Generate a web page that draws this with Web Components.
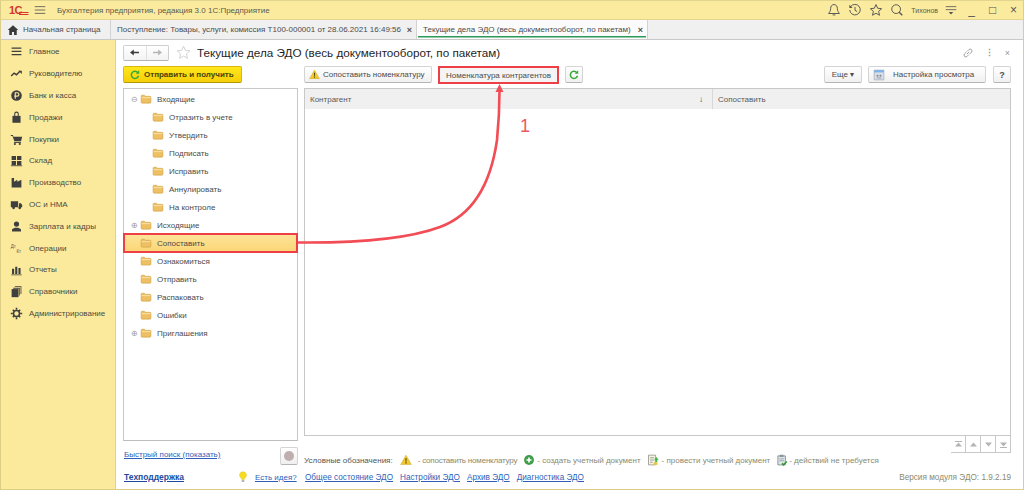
<!DOCTYPE html>
<html lang="ru">
<head>
<meta charset="utf-8">
<title>Текущие дела ЭДО</title>
<style>
  html, body { margin: 0; padding: 0; background: #fff; font-family: "Liberation Sans", Arial, sans-serif; }
  body { width: 1024px; height: 490px; overflow: hidden; }
</style>
</head>
<body>
<edo-app></edo-app>
<script>
(function () {
const ICONS = {
  menu: '<path d="M2 3h12v1.6H2zM2 7h12v1.6H2zM2 11h12v1.6H2z" fill="#3f3f3f"/>',
  lines: '<path d="M1 3.5h14M1 8h14M1 12.5h14" stroke="#555" stroke-width="1.1"/>',
  filter: '<path d="M1 3.5h14M1 7.5h14" stroke="#555" stroke-width="1.1"/><path d="M5 10.5h6L8 14z" fill="#555"/>',
  home: '<path d="M8 1.5L1 8h2v6.5h3.6v-4h2.8v4H13V8h2z" fill="#3a3a3a"/>',
  trend: '<path d="M1.5 11l3.5-3.5 3 2 4.5-4.5" fill="none" stroke="#3f3f3f" stroke-width="1.8"/><path d="M10.5 4.5h4v4z" fill="#3f3f3f"/>',
  ruble: '<circle cx="8" cy="8" r="6.5" fill="#3f3f3f"/><path d="M6.5 12V4.6h2.4a2 2 0 0 1 0 4.2H5.2" fill="none" stroke="#fbea9c" stroke-width="1.4"/>',
  bag: '<path d="M3 6h10v8.5H3z" fill="#3f3f3f"/><path d="M5.8 7V3.6a2.2 2.2 0 0 1 4.4 0V7" fill="none" stroke="#3f3f3f" stroke-width="1.3"/>',
  cart: '<path d="M1 2.5h2.6l.6 2H15l-1.4 5.5H5.4L3 3.8H1z" fill="#3f3f3f"/><path d="M5 11h8.5v1.2H5z" fill="#3f3f3f"/><circle cx="6" cy="13.6" r="1.3" fill="#3f3f3f"/><circle cx="12" cy="13.6" r="1.3" fill="#3f3f3f"/>',
  grid: '<path d="M2 2.5h5.4v5H2zM8.6 2.5H14v5H8.6zM2 8.7h5.4v5H2zM8.6 8.7H14v5H8.6z" fill="#3f3f3f"/><path d="M1 14h14v1H1z" fill="#3f3f3f"/>',
  factory: '<path d="M2 14V2.5h3V7l4-2.5V7l5-2.5V14z" fill="#3f3f3f"/>',
  truck: '<path d="M1 4h9v7.5H1zM11 6.5h2.5L15 8.6v2.9h-4z" fill="#3f3f3f"/><circle cx="4.4" cy="12" r="1.7" fill="#3f3f3f"/><circle cx="12" cy="12" r="1.7" fill="#3f3f3f"/>',
  person: '<circle cx="8" cy="5" r="3.2" fill="#3f3f3f"/><path d="M2.5 14v-2.5L6 9.5h4l3.5 2V14z" fill="#3f3f3f"/>',
  ops: '<text x="1" y="7" font-size="5.5" font-family="Liberation Sans" fill="#555">Дт</text><text x="8" y="13.5" font-size="5.5" font-family="Liberation Sans" fill="#555">Кт</text>',
  bars: '<path d="M2.5 7h2.6v6.5H2.5zM6.4 4.5H9v9H6.4zM10.4 6.2H13v7.3h-2.6zM1.5 14h13v1h-13z" fill="#3f3f3f"/>',
  books: '<path d="M2 5h8.5v10H2z" fill="#3f3f3f"/><path d="M4 3.5h8v9.5h-1V4.5H4zM6 1.5h8v9.5h-1V2.5H6z" fill="#3f3f3f"/>',
  gear: '<circle cx="8" cy="8" r="3.7" fill="none" stroke="#3f3f3f" stroke-width="2"/><path d="M7 1h2v2.4H7zM7 12.6h2V15H7zM1 7h2.4v2H1zM12.6 7H15v2h-2.4zM2.8 4.2l1.4-1.4 1.7 1.7-1.4 1.4zM10.1 11.5l1.4-1.4 1.7 1.7-1.4 1.4zM2.8 11.8l1.7-1.7 1.4 1.4-1.7 1.7zM10.1 4.5l1.7-1.7 1.4 1.4-1.7 1.7z" fill="#3f3f3f"/>',
  folder: '<path d="M1.5 4.2c0-.7.5-1.2 1.2-1.2h3.2l1.3 1.4h6.1c.7 0 1.2.5 1.2 1.2v6.7c0 .7-.5 1.2-1.2 1.2H2.7c-.7 0-1.2-.5-1.2-1.2z" fill="#eec063" stroke="#cf9f45" stroke-width=".8"/><path d="M2.2 6.2h11.6" stroke="#fbe6ae" stroke-width="1.2"/>',
  refresh: '<path d="M12.6 9a4.8 4.8 0 1 1-1-4.3" fill="none" stroke="#35a835" stroke-width="2"/><path d="M13.6 1.8v4.6H9z" fill="#35a835"/>',
  warn: '<path d="M8 1.5L15.2 14H.8z" fill="#f1c92f" stroke="#c9a31e" stroke-width=".6"/><path d="M7.2 5.5h1.6l-.3 4.8h-1zM7.2 11h1.6v1.6H7.2z" fill="#4a3c05"/>',
  plus: '<circle cx="8" cy="8" r="6.6" fill="#3f9e4a"/><path d="M4.6 6.9h2.3V4.6h2.2v2.3h2.3v2.2H9.1v2.3H6.9V9.1H4.6z" fill="#fff"/>',
  docgo: '<path d="M2 1.5h9.5v13H2z" fill="#f3f3e6" stroke="#8b8b7c"/><path d="M4 5h5.5M4 8h5.5M4 11h3.5" stroke="#8b8b7c"/><path d="M9.5 7.5l3-3.5 3 3.5h-1.8v3h-2.4v-3z" fill="#42b64a"/><path d="M9 11h5v3.5H9z" fill="#e8c643"/>',
  clip: '<path d="M2.5 2.5h10v12h-10z" fill="#dfe6ea" stroke="#707a80"/><path d="M5 1h5v3H5z" fill="#8a949a"/><path d="M4.5 6.5h6M4.5 9h6" stroke="#8a949a"/><path d="M8 12.5l2 2 4.5-4.5" fill="none" stroke="#2f9a35" stroke-width="2"/>',
  settings: '<path d="M1.5 1.5h13v13h-13z" fill="#d9dee6" stroke="#a7adb8"/><path d="M1.5 1.5h13v3h-13z" fill="#7fb2e8"/><circle cx="6" cy="9" r="1.4" fill="#838a97"/><circle cx="10" cy="9" r="1.4" fill="#838a97"/><path d="M5 12h6" stroke="#838a97"/>',
  bell: '<path d="M8 1.8c-2.6 0-3.8 2-3.8 4.5 0 3-1.7 4.6-2.4 5.7h12.4c-.7-1.1-2.4-2.7-2.4-5.7 0-2.5-1.2-4.5-3.8-4.5zM6.4 13.6h3.2" fill="none" stroke="#555" stroke-width="1.1"/>',
  history: '<path d="M3 4.3A6 6 0 1 1 2 8" fill="none" stroke="#555" stroke-width="1.1"/><path d="M1.6 2v3.6h3.6z" fill="#555"/><path d="M8 4.5v3.8l2.4 1.5" fill="none" stroke="#555" stroke-width="1.1"/>',
  star: '<path d="M8 1.8l1.9 4.2 4.5.5-3.4 3 1 4.5L8 11.7 4 14l1-4.5-3.4-3 4.5-.5z" fill="none" stroke="#555" stroke-width="1.1"/>',
  search: '<circle cx="7" cy="7" r="5" fill="none" stroke="#555" stroke-width="1.1"/><path d="M10.6 10.6l3.4 3.4" stroke="#555" stroke-width="1.6"/>',
  link: '<path d="M6.5 9.5l3-3M6 6.5L3.4 9.1a2.4 2.4 0 0 0 3.4 3.4L9 10.3M7 5.7l2.2-2.2a2.4 2.4 0 0 1 3.4 3.4L10 9.5" fill="none" stroke="#8a8a8a" stroke-width="1.1"/>',
  bulb: '<path d="M8 1a4.6 4.6 0 0 0-2.6 8.4c.6.5.8 1.1.8 1.8h3.6c0-.7.2-1.3.8-1.8A4.6 4.6 0 0 0 8 1z" fill="#f6dc1b" stroke="#dcbb10" stroke-width=".6"/><path d="M6.2 12h3.6v2.6H6.2z" fill="#b5b5b5"/>',
  back: '<path d="M1.5 8L7 3.5V7h7.5v2H7v3.5z" fill="#3a3a3a"/>',
  forward: '<path d="M14.5 8L9 3.5V7H1.5v2H9v3.5z" fill="#b5b5b5"/>'
};

function icon(name, size) {
  const s = size || 16;
  return `<svg width="${s}" height="${s}" viewBox="0 0 16 16" aria-hidden="true" style="display:block;flex:none">${ICONS[name]}</svg>`;
}

// base class, all elements below just give their css + html
class ShadowEl extends HTMLElement {
  constructor() {
    super();
    this.attachShadow({ mode: 'open' });
  }
  connectedCallback() {
    this.shadowRoot.innerHTML = `<style>${this.css()}</style>${this.html()}`;
  }
  css() { return ':host { display: block; }'; }
  html() { return '<slot></slot>'; }
}

class TitleBar extends ShadowEl {
  css() {
    return `
      :host { display: flex; align-items: center; height: 18px; background: #fbeb9f; border-bottom: 1px solid #e2d68f; color: #5b5a4a; font-size: 8px; box-sizing: content-box; }
      .logo { position: relative; width: 19px; height: 12px; margin-left: 8px; color: #d8352a; font: bold 11px/12px "Liberation Sans", sans-serif; letter-spacing: -.5px; }
      .logo svg { position: absolute; left: 8px; top: 0; }
      .burger { margin-left: 6px; }
      .name { margin-left: 11px; flex: 1; white-space: nowrap; }
      .tools { display: flex; align-items: center; gap: 7px; }
      .user { font-size: 7px; margin-right: -4px; }
      .win { display: flex; margin-right: -1px; }
      .win span { width: 21px; text-align: center; font-size: 12px; color: #555; }
    `;
  }
  html() {
    const swoosh = '<svg width="12" height="12" viewBox="0 0 12 12" aria-hidden="true"><path d="M2 8.5h9.5M2 10.5h9.5" stroke="#d8352a" stroke-width="1"/></svg>';
    return `
      <span class="logo">1С${swoosh}</span>
      <span class="burger">${icon('lines', 12)}</span>
      <span class="name">Бухгалтерия предприятия, редакция 3.0 1С:Предприятие</span>
      <div class="tools">
        ${icon('bell', 14)}${icon('history', 14)}${icon('star', 14)}${icon('search', 14)}
        <span class="user">Тихонов</span>
        <span style="width:20px;padding-left:4px;box-sizing:border-box;margin-right:-7px">${icon('filter', 12)}</span>
        <span class="win"><span>_</span><span>□</span><span>×</span></span>
      </div>`;
  }
}

class TabBar extends ShadowEl {
  css() {
    return `
      :host { display: flex; height: 20px; background: #f0f0f0; border-bottom: 1px solid #c9c9c9; box-sizing: border-box; font-size: 8px; color: #4b4b4b; white-space: nowrap; }
      .tab { display: flex; align-items: center; border-right: 1px solid #d2d2d2; box-sizing: border-box; }
      .home { width: 110px; padding-left: 6px; gap: 4px; }
      .doc { width: 306px; padding: 0 4px 0 6px; justify-content: space-between; }
      .cur { width: 231px; padding: 0 4px 0 6px; justify-content: space-between; background: linear-gradient(#2c9a5a, #2c9a5a) no-repeat 1px 16px / calc(100% - 2px) 1.5px, #fbfbfb; }
      b { font-weight: bold; color: #555; font-size: 9px; }
    `;
  }
  html() {
    return `
      <div class="tab home">${icon('home', 12)}<span>Начальная страница</span></div>
      <div class="tab doc"><span>Поступление: Товары, услуги, комиссия Т100-000001 от 28.06.2021 16:49:56</span><b>×</b></div>
      <div class="tab cur"><span>Текущие дела ЭДО (весь документооборот, по пакетам)</span><b>×</b></div>`;
  }
}

class SideMenu extends ShadowEl {
  css() {
    return `
      :host { display: block; width: 115px; flex: none; background: #fbea9c; border-right: 1px solid #e0d186; box-sizing: border-box; padding-top: 1px; font-size: 8px; color: #4c4b3e; }
      .row { display: flex; align-items: center; height: 21.8px; padding-left: 9px; gap: 6px; white-space: nowrap; }
    `;
  }
  html() {
    const items = [
      ['menu', 'Главное'], ['trend', 'Руководителю'], ['ruble', 'Банк и касса'], ['bag', 'Продажи'],
      ['cart', 'Покупки'], ['grid', 'Склад'], ['factory', 'Производство'], ['truck', 'ОС и НМА'],
      ['person', 'Зарплата и кадры'], ['ops', 'Операции'], ['bars', 'Отчеты'], ['books', 'Справочники'],
      ['gear', 'Администрирование']
    ];
    return items.map(([i, t]) => `<div class="row">${icon(i, 13)}<span>${t}</span></div>`).join('');
  }
}

class ToolButton extends HTMLElement {
  constructor() {
    super();
    this.attachShadow({ mode: 'open' }).innerHTML = `
      <style>
        :host { display: inline-flex; align-items: center; justify-content: center; gap: 3px; box-sizing: border-box; height: 17px; padding: 0 4px; font-size: 8px; color: #4b4b4b; white-space: nowrap;
          background: linear-gradient(#ffffff, #f0f0f0); border: 1px solid #d4d4d4; border-bottom-color: #b5b5b5; border-radius: 2px; flex: none; }
        :host([primary]) { width: 119px; padding-left: 5px; background: linear-gradient(#ffe71c, #f6cf08); border-color: #d9b90c; border-bottom-color: #b39809; color: #4a4205; font-weight: bold; justify-content: flex-start; }
        :host([marked]) { height: 18px; border: 2px solid #ee3f47; border-radius: 0; background: #f4f4f4; }
        :host([left]) { justify-content: flex-start; }
      </style><slot></slot>`;
  }
}

class TreeRow extends HTMLElement {
  constructor() {
    super();
    const depth = +this.getAttribute('depth') || 0;
    const toggle = this.getAttribute('toggle');
    const mark = toggle === 'open' ? '⊖' : toggle === 'closed' ? '⊕' : '';
    this.attachShadow({ mode: 'open' }).innerHTML = `
      <style>
        :host { display: flex; align-items: center; height: 18px; font-size: 8px; color: #4b4b4b; white-space: nowrap; box-sizing: border-box; }
        :host([selected]) { background: linear-gradient(#fde49a, #fbd675); outline: 2px solid #ee3f47; outline-offset: -1px; }
        .t { width: 10px; margin-left: 5px; font-size: 8px; color: #999; text-align: center; flex: none; }
        .f { margin: 0 5px 0 ${depth * 12 + 1}px; }
      </style>
      <span class="t">${mark}</span><span class="f">${icon('folder', 12)}</span><slot></slot>`;
  }
}

class FolderTree extends ShadowEl {
  css() {
    return `:host { display: block; flex: 1; border: 1px solid #c8c8c8; border-bottom-color: #bdbdbd; padding-top: 1px; background: #fff; box-sizing: border-box; }`;
  }
}

class DataTable extends ShadowEl {
  css() {
    return `
      :host { display: block; flex: 1; border: 1px solid #c8c8c8; box-sizing: border-box; background: #fff; font-size: 8px; color: #5a5a5a; }
      .head { display: grid; grid-template-columns: 407px 1fr; height: 20px; background: #f0f0f0; align-items: center; }
      .c { display: flex; justify-content: space-between; align-items: center; padding: 0 5px; height: 100%; box-sizing: border-box; }
      .c + .c { border-left: 1px solid #d8d8d8; }
      .sort { color: #444; font-size: 8px; margin-right: 4px; }
    `;
  }
  html() {
    return `<div class="head"><div class="c"><span>Контрагент</span><span class="sort">↓</span></div><div class="c"><span>Сопоставить</span></div></div>`;
  }
}

class TablePager extends ShadowEl {
  css() {
    return `
      :host { display: flex; justify-content: flex-end; height: 17px; flex: none; }
      .p { width: 15px; display: flex; align-items: center; justify-content: center; box-sizing: border-box; border: 1px solid #c8c8c8; border-top: 0; border-left: 0; }
      .p:first-child { border-left: 1px solid #c8c8c8; }
      svg { display: block; }
    `;
  }
  html() {
    const top = '<path d="M1 1h7v1H1z" fill="#b4b4b4"/>', bot = '<path d="M1 7h7v1H1z" fill="#b4b4b4"/>';
    const up = '<path d="M4.5 2.5L8 6.5H1z" fill="#b4b4b4"/>', dn = '<path d="M1 2.5h7L4.5 6.5z" fill="#b4b4b4"/>';
    return [top + up, up, dn, dn + bot].map((p) => `<div class="p"><svg width="9" height="9" viewBox="0 0 9 9">${p}</svg></div>`).join('');
  }
}

class LegendBar extends ShadowEl {
  css() {
    return `
      :host { display: flex; align-items: center; height: 14px; flex: none; font-size: 8px; color: #8a8a70; white-space: nowrap; }
      .l { color: #555; margin-right: 7px; }
      .tight { letter-spacing: -.2px; }
      span { margin-right: 6px; }
      .a { margin-right: 6px; } .b { margin-right: 2px; } .c { margin-right: 3px; } .d { margin-right: 1px; }
    `;
  }
  html() {
    return `
      <span class="l">Условные обозначения:</span><i class="a">${icon('warn', 12)}</i><span class="tight">- сопоставить номенклатуру</span>
      <i class="b">${icon('plus', 12)}</i><span>- создать учетный документ</span>
      <i class="c">${icon('docgo', 12)}</i><span>- провести учетный документ</span>
      <i class="d">${icon('clip', 12)}</i><span>- действий не требуется</span>`;
  }
}

class LinkBar extends ShadowEl {
  css() {
    return `
      :host { display: flex; align-items: center; height: 22px; padding-bottom: 2px; box-sizing: border-box; flex: none; font-size: 8.2px; white-space: nowrap; }
      a { color: #2f5fb8; text-decoration: underline; }
      .sup { width: 113px; margin-left: 1px; font-weight: bold; font-size: 8.5px; color: #1d4aa0; flex: none; }
      .bulb { width: 18px; flex: none; }
      .idea { width: 50px; flex: none; font-size: 8px; }
      .links { display: flex; gap: 7px; flex: 1; }
      .ver { color: #8a8a70; }
    `;
  }
  html() {
    return `
      <a class="sup">Техподдержка</a><span class="bulb">${icon('bulb', 12)}</span>
      <a class="idea">Есть идея?</a>
      <div class="links"><a>Общее состояние ЭДО</a><a>Настройки ЭДО</a><a>Архив ЭДО</a><a>Диагностика ЭДО</a></div>
      <span class="ver">Версия модуля ЭДО: 1.9.2.19</span>`;
  }
}

class FormHeader extends ShadowEl {
  css() {
    return `
      :host { display: flex; align-items: center; height: 17px; flex: none; }
      .nav { display: flex; width: 46px; height: 16px; box-sizing: border-box; border: 1px solid #cfcfcf; border-bottom-color: #b5b5b5; border-radius: 2px; background: linear-gradient(#fff, #f3f3f3); }
      .nav span { flex: 1; display: flex; align-items: center; justify-content: center; }
      .nav span + span { border-left: 1px solid #e0e0e0; }
      .star { margin: 0 6px 0 7px; }
      h1 { margin: 0; font-size: 11.7px; font-weight: normal; color: #1f1f1f; flex: 1; white-space: nowrap; }
      .r { display: flex; align-items: center; gap: 11px; margin-right: 1px; color: #999; font-size: 9px; }
    `;
  }
  html() {
    const star = '<svg width="15" height="15" viewBox="0 0 16 16" style="display:block"><path d="M8 1.2l2 4.5 4.8.5-3.6 3.2 1 4.8L8 11.8 3.8 14.2l1-4.8L1.2 6.2 6 5.7z" fill="#fff" stroke="#cfcfcf"/></svg>';
    return `
      <div class="nav"><span>${icon('back', 11)}</span><span>${icon('forward', 11)}</span></div>
      <span class="star">${star}</span>
      <h1>Текущие дела ЭДО (весь документооборот, по пакетам)</h1>
      <div class="r">${icon('link', 12)}<span style="font-weight:bold">⋮</span><span>×</span></div>`;
  }
}

class EdoApp extends ShadowEl {
  css() {
    return `
      :host { display: flex; flex-direction: column; width: 1024px; height: 490px; box-sizing: border-box; border: 1px solid #dccf85; border-top-color: #e2d68f; font-family: "Liberation Sans", Arial, sans-serif; position: relative; overflow: hidden; background: #fff; }
      .main { display: flex; flex: 1; min-height: 0; }
      .content { flex: 1; display: flex; flex-direction: column; min-width: 0; padding: 4px 12px 0 7px; box-sizing: border-box; }
      .tools { display: grid; grid-template-columns: 175px 1fr; column-gap: 6px; margin-top: 5px; flex: none; align-items: start; }
      .bar { display: flex; gap: 6px; align-items: flex-start; }
      .spacer { flex: 1; }
      .body { display: grid; grid-template-columns: 175px 1fr; column-gap: 6px; flex: 1; min-height: 0; margin-top: 4px; }
      .col { display: flex; flex-direction: column; min-height: 0; }
      .search { display: flex; align-items: flex-start; justify-content: space-between; height: 26px; flex: none; font-size: 8px; }
      .search a { color: #2f5fb8; text-decoration: underline; margin: 9px 0 0 1px; }
      .stop { width: 18px; height: 18px; box-sizing: border-box; border: 1px solid #d4d4d4; border-bottom-color: #b5b5b5; border-radius: 2px; background: linear-gradient(#fff, #efefef); display: flex; align-items: center; justify-content: center; margin-top: 6px; }
      .stop i { width: 10px; height: 10px; border-radius: 50%; background: #bfaeae; }
      .arrow { position: absolute; left: -1px; top: -1px; pointer-events: none; }
      .num { position: absolute; left: 519px; top: 115px; font-size: 18px; color: #ea5a60; }
    `;
  }
  html() {
    return `
      <title-bar></title-bar>
      <tab-bar></tab-bar>
      <div class="main">
        <side-menu></side-menu>
        <div class="content">
          <form-header></form-header>
          <div class="tools">
            <tool-button primary>${icon('refresh', 12)}Отправить и получить</tool-button>
            <div class="bar">
              <tool-button left style="width:128px">${icon('warn', 11)}Сопоставить номенклатуру</tool-button>
              <tool-button marked style="width:121px">Номенклатура контрагентов</tool-button>
              <tool-button style="width:18px;padding:0">${icon('refresh', 12)}</tool-button>
              <span class="spacer"></span>
              <tool-button style="width:38px;padding:0">Еще ▾</tool-button>
              <tool-button left style="width:118px">${icon('settings', 12)}<span style="margin-left:5px">Настройка просмотра</span></tool-button>
              <tool-button style="width:18px;padding:0;font-weight:bold;font-size:9px;margin-left:1px">?</tool-button>
            </div>
          </div>
          <div class="body">
            <div class="col">
              <folder-tree>
                <tree-row toggle="open">Входящие</tree-row>
                <tree-row depth="1">Отразить в учете</tree-row>
                <tree-row depth="1">Утвердить</tree-row>
                <tree-row depth="1">Подписать</tree-row>
                <tree-row depth="1">Исправить</tree-row>
                <tree-row depth="1">Аннулировать</tree-row>
                <tree-row depth="1">На контроле</tree-row>
                <tree-row toggle="closed">Исходящие</tree-row>
                <tree-row selected>Сопоставить</tree-row>
                <tree-row>Ознакомиться</tree-row>
                <tree-row>Отправить</tree-row>
                <tree-row>Распаковать</tree-row>
                <tree-row>Ошибки</tree-row>
                <tree-row toggle="closed">Приглашения</tree-row>
              </folder-tree>
              <div class="search"><a>Быстрый поиск (показать)</a><span class="stop"><i></i></span></div>
            </div>
            <div class="col">
              <data-table></data-table>
              <table-pager></table-pager>
              <legend-bar></legend-bar>
            </div>
          </div>
          <link-bar></link-bar>
        </div>
      </div>
      <svg class="arrow" width="1024" height="490" viewBox="0 0 1024 490" aria-hidden="true">
        <path d="M298 242.5C350 243 405 240 440 227C478 213 492 175 497 140C499 120 499.5 105 499.5 91" fill="none" stroke="#f24c55" stroke-width="2.6"/>
        <path d="M499.5 84l4 8h-8z" fill="#f24c55"/>
      </svg>
      <span class="num">1</span>`;
  }
}

customElements.define('tool-button', ToolButton);
customElements.define('tree-row', TreeRow);
customElements.define('folder-tree', FolderTree);
customElements.define('data-table', DataTable);
customElements.define('table-pager', TablePager);
customElements.define('legend-bar', LegendBar);
customElements.define('link-bar', LinkBar);
customElements.define('form-header', FormHeader);
customElements.define('title-bar', TitleBar);
customElements.define('tab-bar', TabBar);
customElements.define('side-menu', SideMenu);
customElements.define('edo-app', EdoApp);
})();
</script>
</body>
</html>
